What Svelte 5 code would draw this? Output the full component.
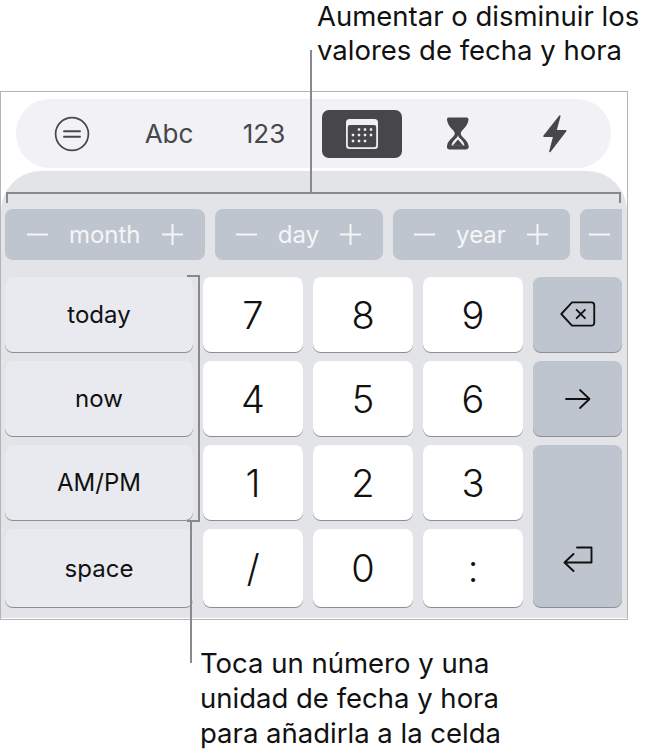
<script lang="ts">
	const steppers = [
		{ label: 'month', width: 199.5 },
		{ label: 'day', width: 168 },
		{ label: 'year', width: 177 }
	];
	const sideKeys = ['today', 'now', 'AM/PM', 'space'];
	const digits = ['7', '8', '9', '4', '5', '6', '1', '2', '3', '/', '0', ':'];
</script>

<div class="page">
	<p class="caption top">
		<span>Aumentar o disminuir los</span>
		<span>valores de fecha y hora</span>
	</p>

	<section class="frame">
		<nav class="toolbar">
			<span class="tool tool-menu">
				<svg width="36" height="36" viewBox="0 0 36 36" fill="none" stroke="#474749">
					<circle cx="18" cy="18" r="16.4" stroke-width="1.7" />
					<path d="M10 15.200h16M10 20.800h16" stroke-width="1.9" stroke-linecap="round" />
				</svg>
			</span>
			<span class="tool tool-abc">Abc</span>
			<span class="tool tool-num">123</span>
			<span class="tool tool-date">
				<svg width="34" height="32" viewBox="0 0 34 32">
					<rect x="1" y="1" width="32" height="30" rx="3.5" fill="#f0f0f3" />
					<rect x="2.8" y="7" width="28.4" height="22.2" rx="2" fill="#474749" />
					<g fill="#f0f0f3">
						{#each [[14, 11.5], [20, 11.5], [26, 11.5], [8, 17], [14, 17], [20, 17], [26, 17], [8, 23], [14, 23], [20, 23]] as [x, y]}
							<rect x={x - 1.2} y={y - 1.2} width="2.4" height="2.4" rx="0.5" />
						{/each}
					</g>
				</svg>
			</span>
			<span class="tool tool-timer">
				<svg width="22" height="33" viewBox="0 0 22 33" fill="#474749">
					<path d="M2.500.5h17a2 2 0 0 1 2 2.200c-.4 4.400-3.200 7.600-5.600 10-1.500 1.500-2.100 2.500-2.100 3.800s.6 2.300 2.100 3.800c2.800 2.800 5.200 5 5.600 8.500a2.600 2.600 0 0 1-2.500 3.700H2.500A2.600 2.600 0 0 1 0 28.800c.4-3.500 2.800-5.700 5.600-8.500 1.500-1.500 2.100-2.500 2.100-3.800s-.6-2.300-2.100-3.800C3.200 10.300.4 7.100 0 2.700a2 2 0 0 1 2-2.200z" />
					<path d="M11 17.500c0 1.700.9 2.800 2.200 4.100 1.900 1.900 3.800 3.700 4.300 6.900h-13c.5-3.200 2.400-5 4.300-6.900 1.300-1.300 2.200-2.400 2.200-4.100z" fill="#f0f0f5" />
					<path d="M11 22.500l5.500 6.300h-11z" />
				</svg>
			</span>
			<span class="tool tool-flash">
				<svg width="24" height="38" viewBox="0 0 24 38" fill="#474749">
					<path d="M16.300.6c.6-.6 1.400 0 1.200.8l-3.700 13.500h8.600c1 0 1.400 1 .8 1.700L7.500 37c-.6.700-1.500.2-1.300-.7l3.700-14.200H1.300c-1 0-1.400-1-.8-1.700z" />
				</svg>
			</span>
		</nav>

		<div class="keyboard">
			<div class="steppers">
				{#each steppers as stepper}
					<div class="stepper" style="width: {stepper.width}px">
						<svg class="sign" width="21" height="21" viewBox="0 0 21 21"><path d="M0 10.500h21" /></svg>
						<span>{stepper.label}</span>
						<svg class="sign" width="21" height="21" viewBox="0 0 21 21"><path d="M0 10.500h21M10.500 0v21" /></svg>
					</div>
				{/each}
				<div class="stepper stepper-cut">
					<svg class="sign" width="21" height="21" viewBox="0 0 21 21"><path d="M0 10.500h21" /></svg>
				</div>
			</div>

			<div class="keys">
				<div class="side">
					{#each sideKeys as key}
						<button class="key side-key">{key}</button>
					{/each}
				</div>
				<div class="digits">
					{#each digits as digit}
						<button class="key digit">{digit}</button>
					{/each}
				</div>
				<div class="actions">
					<button class="key action action-row" aria-label="Borrar">
						<svg class="icon-delete" width="36" height="26" viewBox="0 0 38 28" fill="none" stroke="#111" stroke-width="2" stroke-linejoin="round" stroke-linecap="round">
							<path d="M12.500 1.500h21a3 3 0 0 1 3 3v19a3 3 0 0 1-3 3h-21L1 14z" />
							<path d="M17.500 9.500l9 9M26.500 9.500l-9 9" />
						</svg>
					</button>
					<button class="key action action-row" aria-label="Siguiente">
						<svg width="26" height="22" viewBox="0 0 26 22" fill="none" stroke="#111" stroke-width="1.800" stroke-linejoin="round" stroke-linecap="round">
							<path d="M1 11h23M15 2l9.500 9L15 20" />
						</svg>
					</button>
					<button class="key action action-return" aria-label="Retorno">
						<svg width="30" height="26" viewBox="0 0 30 26" fill="none" stroke="#111" stroke-width="1.900" stroke-linejoin="round" stroke-linecap="round">
							<path d="M14 1.500h14.500v15H2M10.500 8l-9 8.500 9 8.500" />
						</svg>
					</button>
				</div>
			</div>
		</div>

		<span class="bracket bracket-top"></span>
		<span class="bracket bracket-side"></span>
	</section>

	<span class="leader leader-top"></span>
	<span class="leader leader-bottom"></span>

	<p class="caption bottom">Toca un número y una<br />unidad de fecha y hora<br />para añadirla a la celda</p>
</div>

<style>
	:global(body) {
		margin: 0;
		background: #fff;
		font-family: Inter, 'Liberation Sans', sans-serif;
		color: #111;
	}

	.page {
		position: relative;
		width: 649px;
		height: 750px;
		overflow: hidden;
	}

	.caption {
		margin: 0;
		font-size: 27.5px;
		line-height: 35px;
		color: #111;
		white-space: nowrap;
	}

	.caption.top {
		display: flex;
		flex-direction: column;
		gap: 0.4px;
		height: 91px;
		box-sizing: border-box;
		padding-left: 317px;
		line-height: 33.4px;
	}

	.caption.bottom {
		padding: 26px 0 0 200px;
	}

	.frame {
		position: relative;
		box-sizing: border-box;
		width: 628px;
		height: 529px;
		border: 1px solid #b4b4b6;
		background: #fff;
		padding-top: 7px;
	}

	.toolbar {
		display: flex;
		align-items: center;
		width: 595px;
		height: 69px;
		margin-left: 15px;
		border-radius: 34px;
		background: #f1f1f6;
		color: #474749;
		position: relative;
	}

	.tool {
		display: flex;
		align-items: center;
		justify-content: center;
		flex: none;
		font-size: 26px;
		height: 48px;
	}

	.tool-menu {
		width: 36px;
		margin-left: 38px;
	}

	.tool-abc {
		width: 60px;
		margin-left: 49px;
	}

	.tool-num {
		width: 60px;
		margin-left: 35px;
	}

	.tool-date {
		width: 80px;
		margin-left: 28px;
		border-radius: 7px;
		background: #474749;
	}

	.tool-timer {
		width: 22px;
		margin-left: 45px;
	}

	.tool-flash {
		width: 24px;
		margin-left: 74px;
	}

	.keyboard {
		box-sizing: border-box;
		height: 447px;
		margin-top: 3px;
		padding: 38px 4px 0;
		border-radius: 40px 40px 0 0;
		background: #e2e4e8;
	}

	.steppers {
		display: flex;
		gap: 10px;
		height: 51px;
		width: 617px;
		overflow: hidden;
	}

	.stepper {
		display: flex;
		align-items: center;
		justify-content: center;
		gap: 21px;
		flex: none;
		border-radius: 8px;
		background: #bfc5cf;
		color: #f5f6f8;
		font-size: 24px;
		padding-bottom: 1px;
		box-sizing: border-box;
	}

	.stepper-cut {
		width: 43px;
		justify-content: flex-start;
		padding-left: 9px;
		border-radius: 8px 0 0 8px;
	}

	.sign {
		flex: none;
		fill: none;
		stroke: #f5f6f8;
		stroke-width: 2;
	}

	.keys {
		display: flex;
		margin-top: 17px;
	}

	.key {
		display: flex;
		align-items: center;
		justify-content: center;
		box-sizing: border-box;
		margin: 0;
		padding: 0;
		border: 0;
		border-radius: 8px;
		box-shadow: 0 1px 0 #8b8d92;
		font-family: inherit;
		color: #111;
	}

	.side {
		display: grid;
		grid-template-rows: 75px 75px 75px 78px;
		gap: 9px;
		width: 188px;
	}

	.side-key {
		background: #e8eaef;
		font-size: 24px;
	}

	.digits {
		display: grid;
		grid-template-columns: repeat(3, 100px);
		grid-template-rows: 75px 75px 75px 78px;
		gap: 9px 10px;
		margin-left: 10px;
	}

	.digit {
		background: #fff;
		font-size: 38px;
		font-weight: 350;
	}

	.actions {
		display: grid;
		grid-template-rows: 75px 75px 162px;
		gap: 9px;
		width: 89px;
		margin-left: 10px;
	}

	.action {
		background: #bfc5cf;
	}

	.icon-delete {
		margin-bottom: 2px;
	}

	.action-return {
		align-items: flex-end;
		padding-bottom: 35px;
	}

	.bracket {
		position: absolute;
		box-sizing: border-box;
		border: 0 solid #88898b;
	}

	.bracket-top {
		left: 5px;
		top: 100px;
		width: 615px;
		height: 11px;
		border-width: 2px 2px 0;
	}

	.bracket-side {
		left: 186px;
		top: 183px;
		width: 13px;
		height: 247px;
		border-width: 2px 2px 2px 0;
	}

	.leader {
		position: absolute;
		width: 2px;
		background: #88898b;
	}

	.leader-top {
		left: 310px;
		top: 50px;
		height: 142px;
	}

	.leader-bottom {
		left: 190px;
		top: 520px;
		height: 143px;
	}
</style>
